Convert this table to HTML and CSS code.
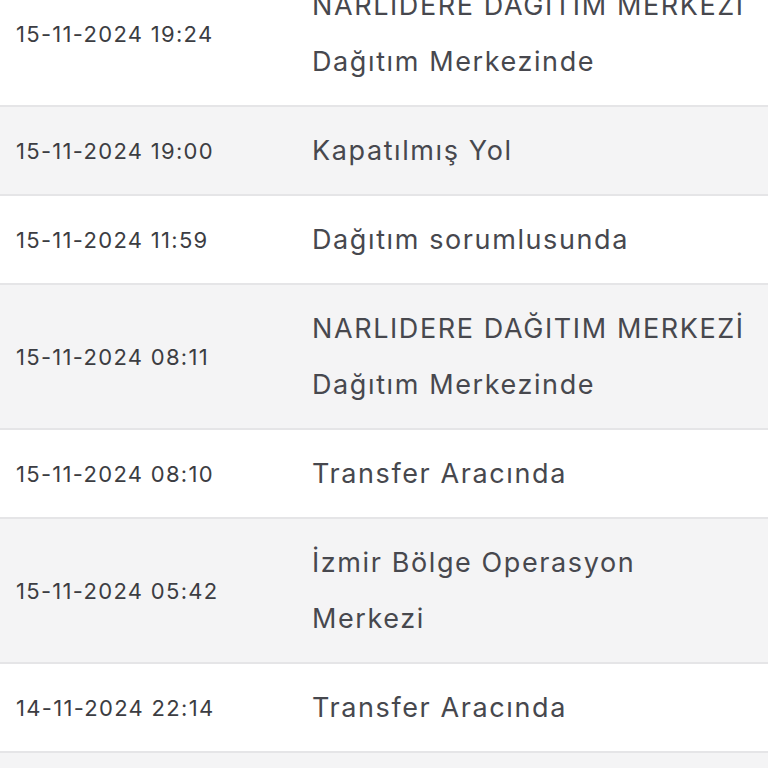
FILE: index.html
```html
<!DOCTYPE html>
<html lang="tr">
<head>
<meta charset="utf-8">
<link rel="stylesheet" href="styles.css">
</head>
<body>
<div class="list">
  <div class="row">
    <div class="date">15-11-2024 19:24</div>
    <div class="desc">NARLIDERE DAĞITIM MERKEZİ<br>Dağıtım Merkezinde</div>
  </div>
  <div class="row alt">
    <div class="date">15-11-2024 19:00</div>
    <div class="desc">Kapatılmış Yol</div>
  </div>
  <div class="row">
    <div class="date">15-11-2024 11:59</div>
    <div class="desc">Dağıtım sorumlusunda</div>
  </div>
  <div class="row alt">
    <div class="date">15-11-2024 08:11</div>
    <div class="desc">NARLIDERE DAĞITIM MERKEZİ<br>Dağıtım Merkezinde</div>
  </div>
  <div class="row">
    <div class="date">15-11-2024 08:10</div>
    <div class="desc">Transfer Aracında</div>
  </div>
  <div class="row alt">
    <div class="date">15-11-2024 05:42</div>
    <div class="desc">İzmir Bölge Operasyon<br>Merkezi</div>
  </div>
  <div class="row">
    <div class="date">14-11-2024 22:14</div>
    <div class="desc">Transfer Aracında</div>
  </div>
  <div class="row alt">
    <div class="date">14-11-2024 21:30</div>
    <div class="desc">Transfer Aracında</div>
  </div>
</div>
</body>
</html>
```

FILE: styles.css
```css
html, body {
  margin: 0;
  padding: 0;
  background: #ffffff;
  overflow: hidden;
}
body {
  height: 768px;
  font-family: "Inter", "Noto Sans", sans-serif;
}
.list {
  margin-top: -38px;
}
.row {
  display: grid;
  grid-template-columns: 296px 1fr;
  align-items: center;
  padding: 15.5px 0 15.5px 16px;
  border-bottom: 2px solid #e5e5e7;
  background: #ffffff;
}
.row.alt {
  background: #f4f4f5;
}
.date {
  font-size: 22px;
  letter-spacing: 1.3px;
  color: #3c3d42;
}
.desc {
  font-size: 27px;
  letter-spacing: 1.6px;
  line-height: 56px;
  color: #47484e;
}
```
